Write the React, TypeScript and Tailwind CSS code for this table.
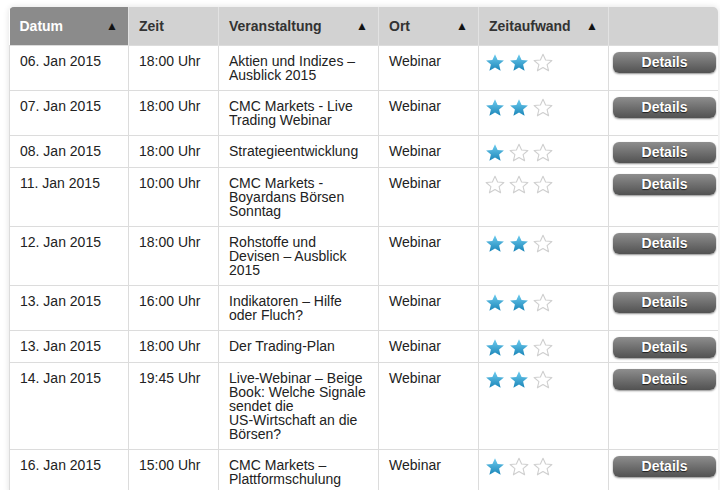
import React from "react"

type Row = {
  date: string
  time: string
  title: string[]
  place: string
  stars: number
}

const rows: Row[] = [
  { date: "06. Jan 2015", time: "18:00 Uhr", title: ["Aktien und Indizes –", "Ausblick 2015"], place: "Webinar", stars: 2 },
  { date: "07. Jan 2015", time: "18:00 Uhr", title: ["CMC Markets - Live", "Trading Webinar"], place: "Webinar", stars: 2 },
  { date: "08. Jan 2015", time: "18:00 Uhr", title: ["Strategieentwicklung"], place: "Webinar", stars: 1 },
  { date: "11. Jan 2015", time: "10:00 Uhr", title: ["CMC Markets -", "Boyardans Börsen", "Sonntag"], place: "Webinar", stars: 0 },
  { date: "12. Jan 2015", time: "18:00 Uhr", title: ["Rohstoffe und", "Devisen – Ausblick", "2015"], place: "Webinar", stars: 2 },
  { date: "13. Jan 2015", time: "16:00 Uhr", title: ["Indikatoren – Hilfe", "oder Fluch?"], place: "Webinar", stars: 2 },
  { date: "13. Jan 2015", time: "18:00 Uhr", title: ["Der Trading-Plan"], place: "Webinar", stars: 2 },
  {
    date: "14. Jan 2015",
    time: "19:45 Uhr",
    title: ["Live-Webinar – Beige", "Book: Welche Signale", "sendet die", "US-Wirtschaft an die", "Börsen?"],
    place: "Webinar",
    stars: 2,
  },
  { date: "16. Jan 2015", time: "15:00 Uhr", title: ["CMC Markets –", "Plattformschulung"], place: "Webinar", stars: 1 },
]

const STAR = "M10 1.2 L12.6 7 L18.9 7.5 L14.1 11.6 L15.6 17.8 L10 14.5 L4.4 17.8 L5.9 11.6 L1.1 7.5 L7.4 7 Z"

function Star({ filled }: { filled: boolean }) {
  return (
    <svg width="20" height="19" viewBox="0 0 20 19" className="block">
      <defs>
        <linearGradient id="starBlue" x1="0" y1="0" x2="0" y2="1">
          <stop offset="0" stopColor="#6fcdf0" />
          <stop offset="1" stopColor="#1a85b8" />
        </linearGradient>
      </defs>
      {filled ? (
        <path d={STAR} fill="url(#starBlue)" />
      ) : (
        <path d={STAR} fill="none" stroke="#cfcfcf" strokeWidth="1.1" strokeLinejoin="round" />
      )}
    </svg>
  )
}

function SortArrow() {
  return <span className="text-[12px] leading-none text-[#111]">▲</span>
}

const cell = "border-l border-[#dcdcdc] pl-[10px] pr-[6px] pt-[8px] pb-[8px]"

export default function App() {
  return (
    <div className="min-h-screen bg-white pt-[7px] pl-[9px]" style={{ fontFamily: '"Liberation Sans", Arial, sans-serif' }}>
      <div className="w-[709px] overflow-hidden rounded-t-[5px] shadow-[0_0_6px_rgba(0,0,0,0.12)]">
        <table className="w-[709px] table-fixed border-collapse text-[14px] leading-[14px] text-[#222]">
          <colgroup>
            <col className="w-[119px]" />
            <col className="w-[90px]" />
            <col className="w-[160px]" />
            <col className="w-[100px]" />
            <col className="w-[130px]" />
            <col className="w-[110px]" />
          </colgroup>
          <thead>
            <tr className="h-[38px] bg-[#d2d2d2] text-left font-bold text-[#333]">
              <th className="bg-[#8b8b8b] px-[10px] text-white">
                <div className="flex items-center justify-between">
                  <span>Datum</span>
                  <SortArrow />
                </div>
              </th>
              <th className="border-l border-[#e2e2e2] px-[10px]">Zeit</th>
              <th className="border-l border-[#e2e2e2] px-[10px]">
                <div className="flex items-center justify-between">
                  <span>Veranstaltung</span>
                  <SortArrow />
                </div>
              </th>
              <th className="border-l border-[#e2e2e2] px-[10px]">
                <div className="flex items-center justify-between">
                  <span>Ort</span>
                  <SortArrow />
                </div>
              </th>
              <th className="border-l border-[#e2e2e2] px-[10px]">
                <div className="flex items-center justify-between">
                  <span>Zeitaufwand</span>
                  <SortArrow />
                </div>
              </th>
              <th className="border-l border-[#e2e2e2]"></th>
            </tr>
          </thead>
          <tbody>
            {rows.map((r, i) => (
              <tr key={i} className="border-t border-[#dcdcdc] align-top">
                <td className={cell}>{r.date}</td>
                <td className={cell}>{r.time}</td>
                <td className={cell}>
                  {r.title.map((line, j) => (
                    <div key={j} className="whitespace-nowrap">
                      {line}
                    </div>
                  ))}
                </td>
                <td className={cell}>{r.place}</td>
                <td className="border-l border-[#dcdcdc] pl-[6px] pt-[7px]">
                  <div className="flex gap-[4px]">
                    {[0, 1, 2].map((s) => (
                      <Star key={s} filled={s < r.stars} />
                    ))}
                  </div>
                </td>
                <td className="border-l border-r border-[#dcdcdc] pl-[4px] pr-[2px] pt-[6px] pb-[4px]">
                  <button className="block h-[21px] w-full rounded-[6px] bg-gradient-to-b from-[#8e8e8e] to-[#525252] text-[14px] leading-[21px] font-bold text-white shadow-[0_1px_2px_rgba(0,0,0,0.45)] [text-shadow:0_1px_1px_rgba(0,0,0,0.7)]">
                    Details
                  </button>
                </td>
              </tr>
            ))}
          </tbody>
        </table>
      </div>
    </div>
  )
}
